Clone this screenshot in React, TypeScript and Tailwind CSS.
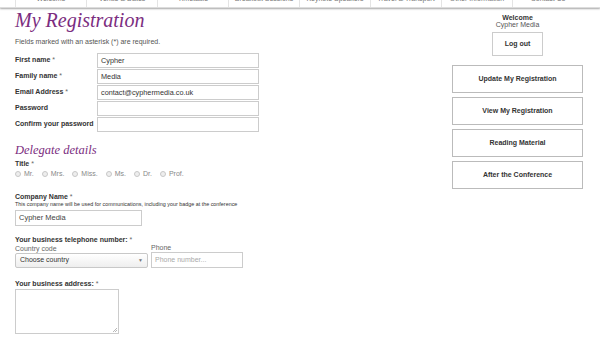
import React from "react";

const navItems = ["Welcome", "Venue & Dates", "Timetable", "Breakout Sessions", "Keynote Speakers", "Travel & Transport", "Other Information", "Contact Us"];

function Row({ label, req, value }: { label: string; req?: boolean; value?: string }) {
  return (
    <div className="flex items-center h-4">
      <div className="w-[82px] text-[7px] font-bold text-[#333] whitespace-nowrap">
        {label}
        {req && <span className="font-normal text-[#666]"> *</span>}
      </div>
      <div className="w-[162px] h-[15px] border border-[#ccc] bg-white px-[3px] text-[7.3px] leading-[13px] text-[#333]">{value}</div>
    </div>
  );
}

export default function App() {
  return (
    <div className="w-[600px] h-[340px] bg-white overflow-hidden relative" style={{ fontFamily: '"Liberation Sans", Arial, sans-serif' }}>
      <div className="h-[8px] overflow-hidden flex pl-[15px] shadow-[0_1px_2px_rgba(0,0,0,0.35)] border-b border-[#ddd] relative z-10 bg-white">
        {navItems.map((n) => (
          <div key={n} className="w-[71px] shrink-0 border-l border-[#e4e4e4] text-center text-[7px] text-[#777] leading-[7px] -mt-[5px]">
            {n}
          </div>
        ))}
      </div>
      <div className="flex">
        <div className="w-[440px] pl-[15px]">
          <h1 className="text-[20px] italic text-[#7b2d80] leading-[22px] mt-[1px]" style={{ fontFamily: '"Liberation Serif", Georgia, serif' }}>
            My Registration
          </h1>
          <p className="text-[7px] text-[#555] mt-[6px] leading-[9px]">Fields marked with an asterisk (*) are required.</p>
          <div className="mt-[6px] flex flex-col">
            <Row label="First name" req value="Cypher" />
            <Row label="Family name" req value="Media" />
            <Row label="Email Address" req value="contact@cyphermedia.co.uk" />
            <Row label="Password" />
            <Row label="Confirm your password" />
          </div>
          <h2 className="text-[12.5px] italic text-[#7b2d80] mt-[10px] leading-[16px]" style={{ fontFamily: '"Liberation Serif", Georgia, serif' }}>
            Delegate details
          </h2>
          <div className="text-[7px] font-bold text-[#333] mt-[1px] leading-[9px]">
            Title <span className="font-normal text-[#666]">*</span>
          </div>
          <div className="flex items-center gap-[8px] text-[7px] text-[#888] leading-[10px] mt-[1px]">
            {["Mr.", "Mrs.", "Miss.", "Ms.", "Dr.", "Prof."].map((t) => (
              <div key={t} className="flex items-center gap-[3px]">
                <span className="w-[6px] h-[6px] rounded-full border border-[#c8c8c8] bg-[#eee]"></span>
                {t}
              </div>
            ))}
          </div>
          <div className="text-[7px] font-bold text-[#333] mt-[13px] leading-[9px]">
            Company Name <span className="font-normal text-[#666]">*</span>
          </div>
          <div className="text-[5.4px] text-[#333] leading-[7px] whitespace-nowrap">This company name will be used for communications, including your badge at the conference</div>
          <div className="w-[127px] h-[16px] border border-[#ccc] mt-[2px] px-[3px] text-[7.5px] leading-[14px] text-[#444]">Cypher Media</div>
          <div className="text-[7px] font-bold text-[#333] mt-[9px] leading-[9px]">
            Your business telephone number: <span className="font-normal text-[#666]">*</span>
          </div>
          <div className="flex items-end gap-[3px]">
            <div>
              <div className="text-[7px] text-[#666] leading-[8px]">Country code</div>
              <div className="w-[133px] h-[15px] border border-[#c8c8c8] rounded-[2px] bg-gradient-to-b from-white to-[#eee] flex items-center justify-between px-[4px] text-[7px] text-[#333]">
                <span>Choose country</span>
                <span className="text-[5px] text-[#777]">▼</span>
              </div>
            </div>
            <div>
              <div className="text-[7px] text-[#666] leading-[8px]">Phone</div>
              <div className="w-[92px] h-[16px] border border-[#ccc] px-[3px] text-[7px] leading-[14px] text-[#aaa]">Phone number...</div>
            </div>
          </div>
          <div className="text-[7px] font-bold text-[#333] mt-[11px] leading-[9px]">
            Your business address: <span className="font-normal text-[#666]">*</span>
          </div>
          <div className="w-[104px] h-[45px] border border-[#ccc] mt-[1px] relative">
            <svg className="absolute right-[1px] bottom-[1px]" width="5" height="5" viewBox="0 0 5 5">
              <path d="M5 1L1 5M5 3L3 5" stroke="#999" strokeWidth="0.7" />
            </svg>
          </div>
        </div>
        <div className="w-[160px] flex flex-col items-center pl-[12px] pr-[17px]">
          <div className="text-[7px] font-bold text-[#333] mt-[6px] leading-[7px]">Welcome</div>
          <div className="text-[7px] text-[#555] leading-[7px]">Cypher Media</div>
          <div className="mt-[4px] w-[51px] h-[24px] border border-[#ccc] flex items-center justify-center text-[7px] font-bold text-[#333]">Log out</div>
          <div className="mt-[9px] flex flex-col gap-[4px] w-full">
            {["Update My Registration", "View My Registration", "Reading Material", "After the Conference"].map((b) => (
              <div key={b} className="h-[28px] w-full border border-[#bbb] flex items-center justify-center text-[7px] font-bold text-[#333]">
                {b}
              </div>
            ))}
          </div>
        </div>
      </div>
    </div>
  );
}
